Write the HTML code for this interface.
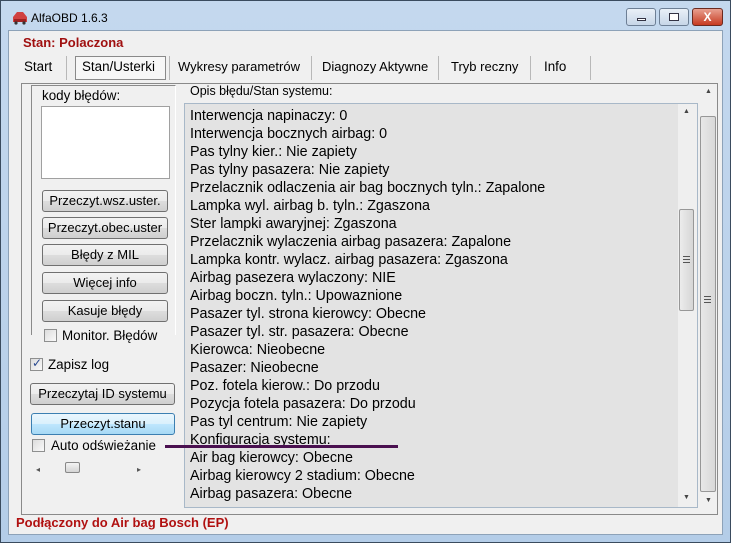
<!DOCTYPE html>
<html><head><meta charset="utf-8"><style>
*{margin:0;padding:0;box-sizing:border-box}
body{width:731px;height:543px;overflow:hidden;background:#b9d1ea;font-family:"Liberation Sans",sans-serif;position:relative}
.a{position:absolute}
.win{left:0;top:0;width:731px;height:543px;background:linear-gradient(#c4d8ee,#b4cde8);border:1px solid #3a4b5e}
.client{left:8px;top:30px;width:715px;height:505px;background:#f0f0f0;border:1px solid #8da2b8}
.t{font-size:13.4px;color:#000;white-space:nowrap}
.btn{position:absolute;height:22px;border:1px solid #707070;border-radius:3px;background:linear-gradient(#f2f2f2 0%,#ebebeb 50%,#dddddd 51%,#cfcfcf 100%);font-size:13px;text-align:center;line-height:20px;white-space:nowrap}
.cb{position:absolute;width:13px;height:13px;border:1px solid #8e8f8f;background:linear-gradient(135deg,#dcdcdc,#fafafa)}
.cap{position:absolute;top:8px;height:18px;border:1px solid #6d7f95;border-radius:3px;background:linear-gradient(#e9f0f8,#c7d6e8)}
.sep{position:absolute;top:56px;width:1px;height:24px;background:#b8b8b8}
</style></head><body>
<div class="a win"></div>
<svg class="a" style="left:11px;top:9px" width="18" height="16"><path d="M2 8 L6 3 H12 L16 8 V13 H2Z" fill="#d04040"/><rect x="3" y="10" width="12" height="3" fill="#a02020"/><circle cx="5" cy="14" r="1.6" fill="#333"/><circle cx="13" cy="14" r="1.6" fill="#333"/></svg>
<div class="a t" style="left:31px;top:11px;font-size:12px">AlfaOBD 1.6.3</div>
<div class="cap" style="left:626px;width:30px"><div class="a" style="left:10px;top:9px;width:9px;height:3px;border:1px solid #334;background:#fff"></div></div>
<div class="cap" style="left:659px;width:30px"><div class="a" style="left:9px;top:4px;width:10px;height:8px;border:1px solid #334;background:#fff"></div></div>
<div class="cap" style="left:692px;width:31px;background:linear-gradient(#e8a090,#c73a20);border-color:#6b2a20"><div class="a" style="left:0;top:0;width:29px;text-align:center;color:#fff;font-weight:bold;font-size:12px;line-height:16px">X</div></div>
<div class="a client"></div>
<div class="a t" style="left:23px;top:35px;color:#a01010;font-weight:bold;font-size:13px">Stan: Polaczona</div>
<div class="a t" style="left:24px;top:59px">Start</div>
<div class="sep" style="left:66px"></div>
<div class="a" style="left:75px;top:56px;width:91px;height:24px;border:1px solid #8a8a8a;background:#f7f7f7"></div>
<div class="a t" style="left:82px;top:59px">Stan/Usterki</div>
<div class="sep" style="left:169px"></div>
<div class="a t" style="left:178px;top:59px;font-size:13px">Wykresy parametrów</div>
<div class="sep" style="left:311px"></div>
<div class="a t" style="left:322px;top:59px;font-size:13px">Diagnozy Aktywne</div>
<div class="sep" style="left:438px"></div>
<div class="a t" style="left:451px;top:59px;font-size:13px">Tryb reczny</div>
<div class="sep" style="left:530px"></div>
<div class="a t" style="left:544px;top:59px">Info</div>
<div class="sep" style="left:590px"></div>
<div class="a" style="left:21px;top:83px;width:697px;height:432px;border:1px solid #8a8a8a;background:#f0f0f0"></div>
<div class="a" style="left:31px;top:85px;width:145px;height:250px;border-left:1px solid #8a8a8a;border-top:1px solid #8a8a8a;border-right:1px solid #fff"></div>
<div class="a t" style="left:42px;top:88px">kody błędów:</div>
<div class="a" style="left:41px;top:106px;width:129px;height:73px;background:#fff;border:1px solid #a0a0a0"></div>
<div class="btn" style="left:42px;top:190px;width:126px">Przeczyt.wsz.uster.</div>
<div class="btn" style="left:42px;top:217px;width:126px">Przeczyt.obec.uster</div>
<div class="btn" style="left:42px;top:244px;width:126px">Błędy z MIL</div>
<div class="btn" style="left:42px;top:272px;width:126px">Więcej info</div>
<div class="btn" style="left:42px;top:300px;width:126px">Kasuje błędy</div>
<div class="cb" style="left:44px;top:329px"></div>
<div class="a t" style="left:62px;top:328px">Monitor. Błędów</div>
<div class="cb" style="left:30px;top:358px"></div>
<div class="a" style="left:32px;top:356px;font-size:12px;color:#2a4a90">✓</div>
<div class="a t" style="left:48px;top:357px">Zapisz log</div>
<div class="btn" style="left:30px;top:383px;width:145px">Przeczytaj ID systemu</div>
<div class="btn" style="left:31px;top:413px;width:144px;border-color:#3c7fb1;background:linear-gradient(#eaf6fd,#d9f0fc 50%,#bee6fd 51%,#a7d9f5)">Przeczyt.stanu</div>
<div class="cb" style="left:32px;top:439px"></div>
<div class="a t" style="left:51px;top:438px">Auto odświeżanie</div>
<div class="a" style="left:36px;top:465px;font-size:8px;color:#555">◂</div>
<div class="a" style="left:65px;top:462px;width:15px;height:11px;border:1px solid #888;border-radius:2px;background:linear-gradient(#f4f4f4,#d4d4d4)"></div>
<div class="a" style="left:137px;top:465px;font-size:8px;color:#555">▸</div>
<div class="a t" style="left:190px;top:84px;font-size:12.5px">Opis błędu/Stan systemu:</div>
<div class="a" style="left:700px;top:84px;width:17px;height:430px;background:#f0f0f0"></div>
<div class="a" style="left:705px;top:88px;font-size:7px;color:#444">▲</div>
<div class="a" style="left:700px;top:116px;width:16px;height:376px;border:1px solid #979797;border-radius:2px;background:linear-gradient(90deg,#e8e8e8,#d8d8d8)"></div>
<div class="a" style="left:704px;top:296px;width:7px;height:7px;border-top:1px solid #555;border-bottom:1px solid #555"><div style="margin-top:2px;height:1px;background:#555"></div></div>
<div class="a" style="left:705px;top:497px;font-size:7px;color:#444">▼</div>
<div class="a" style="left:184px;top:103px;width:514px;height:405px;background:#e3e3e3;border:1px solid #a8b8c8"></div>
<div class="a" style="left:678px;top:104px;width:19px;height:403px;background:#efefef"></div>
<div class="a" style="left:683px;top:108px;font-size:7px;color:#444">▲</div>
<div class="a" style="left:679px;top:209px;width:15px;height:102px;border:1px solid #979797;border-radius:2px;background:linear-gradient(90deg,#ececec,#d6d6d6)"></div>
<div class="a" style="left:683px;top:256px;width:7px;height:7px;border-top:1px solid #555;border-bottom:1px solid #555"><div style="margin-top:2px;height:1px;background:#555"></div></div>
<div class="a" style="left:683px;top:494px;font-size:7px;color:#444">▼</div>
<div class="a t" style="left:190px;top:107px;line-height:18px;font-size:14.3px">
Interwencja napinaczy: 0<br>Interwencja bocznych airbag: 0<br>Pas tylny kier.: Nie zapiety<br>Pas tylny pasazera: Nie zapiety<br>Przelacznik odlaczenia air bag bocznych tyln.: Zapalone<br>Lampka wyl. airbag b. tyln.: Zgaszona<br>Ster lampki awaryjnej: Zgaszona<br>Przelacznik wylaczenia airbag pasazera: Zapalone<br>Lampka kontr. wylacz. airbag pasazera: Zgaszona<br>Airbag pasezera wylaczony: NIE<br>Airbag boczn. tyln.: Upowaznione<br>Pasazer tyl. strona kierowcy: Obecne<br>Pasazer tyl. str. pasazera: Obecne<br>Kierowca: Nieobecne<br>Pasazer: Nieobecne<br>Poz. fotela kierow.: Do przodu<br>Pozycja fotela pasazera: Do przodu<br>Pas tyl centrum: Nie zapiety<br>Konfiguracja systemu:<br>Air bag kierowcy: Obecne<br>Airbag kierowcy 2 stadium: Obecne<br>Airbag pasazera: Obecne</div>
<div class="a" style="left:165px;top:445px;width:233px;height:3px;background:#4a1050"></div>
<div class="a t" style="left:16px;top:515px;color:#b01010;font-weight:bold;font-size:13px">Podłączony do Air bag Bosch (EP)</div>
</body></html>
